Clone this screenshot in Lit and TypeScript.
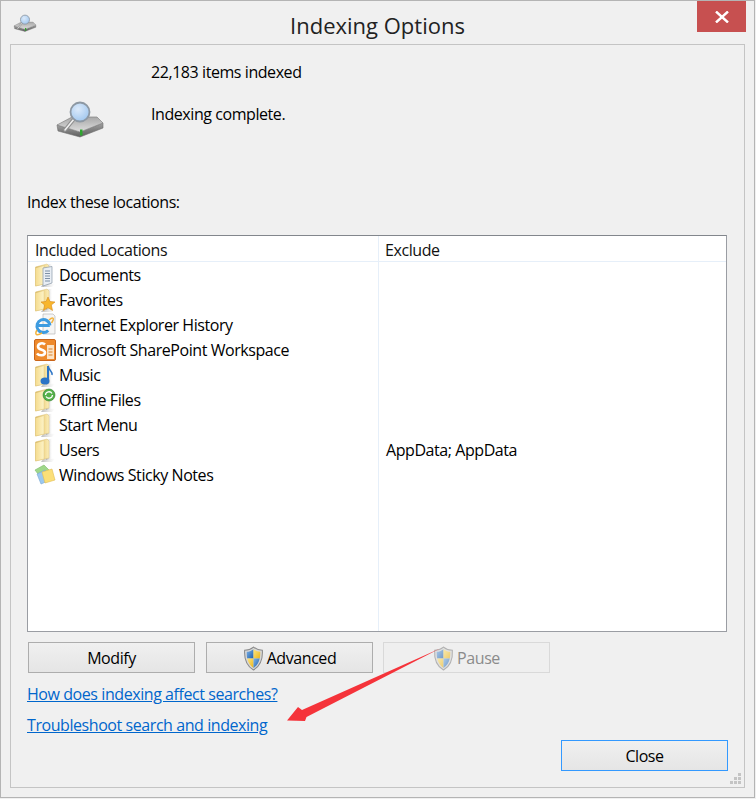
import { LitElement, html, css, svg } from "lit";
import { customElement } from "lit/decorators.js";

const defs = svg`
<defs>
  <linearGradient id="fold" x1="0" y1="0" x2="1" y2="0"><stop offset="0" stop-color="#f5dc8e"/><stop offset="1" stop-color="#fdf3c8"/></linearGradient>
  <linearGradient id="foldb" x1="0" y1="0" x2="1" y2="0"><stop offset="0" stop-color="#c9a040"/><stop offset=".5" stop-color="#efd283"/><stop offset="1" stop-color="#fbeeb9"/></linearGradient>
  <linearGradient id="shade" x1="0" y1="0" x2="1" y2="0"><stop offset="0" stop-color="#9a9a9a" stop-opacity=".7"/><stop offset="1" stop-color="#c8c8c8" stop-opacity="0"/></linearGradient>
  <linearGradient id="disktop" x1="0" y1="0" x2="0" y2="1"><stop offset="0" stop-color="#a8a8a8"/><stop offset="1" stop-color="#dedede"/></linearGradient>
  <linearGradient id="disk" x1="0" y1="0" x2="0" y2="1"><stop offset="0" stop-color="#a0a0a0"/><stop offset="1" stop-color="#5e5e5e"/></linearGradient>
  <radialGradient id="lens" cx=".4" cy=".35" r=".7"><stop offset="0" stop-color="#dceafa"/><stop offset="1" stop-color="#9fc6ee"/></radialGradient>
  <linearGradient id="sh1" x1="0" y1="0" x2="1" y2="1"><stop offset="0" stop-color="#7fb4e6"/><stop offset="1" stop-color="#1f5fae"/></linearGradient>
  <linearGradient id="sh2" x1="0" y1="0" x2="1" y2="1"><stop offset="0" stop-color="#ffe680"/><stop offset="1" stop-color="#eab51c"/></linearGradient>
</defs>`;

const folderBase = svg`
  <path d="M10 20 L21 21 L18 24 L7 24 Z" fill="url(#shade)"/>
  <path d="M12 2 L18 0.500 L18 20 L12 22 Z" fill="url(#shade)"/>
  <path d="M1.500 4 L13 1 L15 3 L15 20 L1.500 23 Z" fill="url(#foldb)" stroke="#dcc27c" stroke-width=".5"/>
  <path d="M1.500 5 L10 2.500 L10 21 L1.500 23 Z" fill="url(#fold)" stroke="#e0c882" stroke-width=".5"/>`;

const folder = (over: unknown = null) => svg`<svg class="ico" viewBox="0 0 22 24">${folderBase}${over}</svg>`;

const icons: Record<string, unknown> = {
  doc: folder(svg`<path d="M9 5 L18 3.500 L18 20 L9 23 Z" fill="#e9eef4" stroke="#8a98a8" stroke-width=".7"/><path d="M11 8h5M11 10.500h5M11 13h5M11 15.500h5M11 18h5" stroke="#7d90a6" stroke-width="1"/>`),
  fav: folder(svg`<path d="M14 9 L16 13.500 L21 14 L17.300 17 L18.500 22.500 L14 19.600 L9.500 22.500 L10.700 17 L7 14 L12 13.500 Z" fill="#f8b62c" stroke="#d98a1a" stroke-width=".6"/>`),
  ie: svg`<svg class="ico" viewBox="0 0 22 24">
    <path d="M9 1 L19 1 L21 3 L21 21 L9 21 Z" fill="#f5f5f5" stroke="#b8b8b8" stroke-width=".7"/>
    <path d="M3.600 12.500 H15.800 M15.900 12.500 A6.500 6.500 0 1 0 14.200 17.500" fill="none" stroke="#3d9be0" stroke-width="3"/>
    <path d="M15 7 C19 3.500 21 5 17.500 10 M3 17 C0 22 3 23 8 20" fill="none" stroke="#f2b33d" stroke-width="1.500"/></svg>`,
  sp: svg`<svg class="ico" viewBox="0 0 22 24">
    <rect x="0.500" y="1.500" width="21" height="21" rx="1.500" fill="#ee8a2c" stroke="#c9651a"/>
    <path d="M13 7 H20 V21 H13 Z" fill="#fbe3c6"/>
    <path d="M14.500 11h4M14.500 14h4M14.500 17h4" stroke="#d9822b" stroke-width="1"/>
    <path d="M11 6.500 C9 4.500 4 5 4 8.500 C4 12.500 11 11 11 14.500 C11 18 5 18 3 15.500" fill="none" stroke="#fff" stroke-width="2.600"/></svg>`,
  music: folder(svg`<path d="M14 3 L14 17" stroke="#2b74c6" stroke-width="2"/><path d="M14 3 C15 8 19 8 18 12" fill="none" stroke="#2b74c6" stroke-width="1.500"/><ellipse cx="11" cy="18" rx="4.500" ry="3.500" fill="#2b74c6"/>`),
  off: folder(svg`<circle cx="15" cy="7" r="6" fill="#55b04a" stroke="#2f7d2a" stroke-width=".6"/><path d="M11.500 7 A3.500 3.500 0 0 1 18 5.500 M18.500 7 A3.500 3.500 0 0 1 12 8.500" fill="none" stroke="#fff" stroke-width="1.300"/>`),
  plain: folder(),
  notes: svg`<svg class="ico" viewBox="0 0 22 24">
    <path d="M1 7 L10 2 L16 8 L7 15 Z" fill="#9fd88a" stroke="#7db86a" stroke-width=".6"/>
    <path d="M3 11 L11 7 L14 18 L7 21 Z" fill="#9cc8ee" stroke="#78a8d4" stroke-width=".6"/>
    <path d="M8 9 L18 6 L21 17 L11 20 Z" fill="#fbdf78" stroke="#e2bd50" stroke-width=".6"/></svg>`,
};

const indexer = (cls: string) => svg`<svg class=${cls} viewBox="0 0 50 40">
  <path d="M2 27 L25 34 L25 39 L3 33 Z" fill="url(#disk)" stroke="#6e6e6e" stroke-width=".6" stroke-linejoin="round"/>
  <path d="M25 34 L48 25 L48 30 L25 39 Z" fill="url(#disk)" stroke="#6e6e6e" stroke-width=".6" stroke-linejoin="round"/>
  <path d="M2 27 L17 19 L42 19 L48 25 L25 34 Z" fill="url(#disktop)" stroke="#858585" stroke-width=".7" stroke-linejoin="round"/>
  <rect x="25" y="31.500" width="2.500" height="6" fill="#2fa52f"/>
  <path d="M10 32 L19 21" stroke="#8f8f8f" stroke-width="3.600" stroke-linecap="round"/>
  <path d="M10 32 L19 21" stroke="#f0f0f0" stroke-width="1.500" stroke-linecap="round"/>
  <circle cx="25" cy="14" r="9.500" fill="url(#lens)" stroke="#8d98a3" stroke-width="1.800"/>
</svg>`;

const shield = (cls = "") => svg`<svg class="shield ${cls}" viewBox="0 0 20 24">
  <path d="M10 1 C7 3.500 4 4 1.500 4 C1 12 3 19 10 23 C17 19 19 12 18.500 4 C16 4 13 3.500 10 1 Z" fill="#d8d8d8" stroke="#8a8a8a" stroke-width="1"/>
  <path d="M10 3 C8 4.500 5.500 5.500 3.500 5.500 C3.500 8 3.500 10 4 12 H10 Z" fill="url(#sh1)"/>
  <path d="M10 3 C12 4.500 14.500 5.500 16.500 5.500 C16.500 8 16.500 10 16 12 H10 Z" fill="url(#sh2)"/>
  <path d="M4 12 H10 V21 C6.500 19 4.800 15.500 4 12 Z" fill="url(#sh2)"/>
  <path d="M16 12 H10 V21 C13.500 19 15.200 15.500 16 12 Z" fill="url(#sh1)"/>
</svg>`;

const rows: [string, string, string][] = [
  ["doc", "Documents", ""],
  ["fav", "Favorites", ""],
  ["ie", "Internet Explorer History", ""],
  ["sp", "Microsoft SharePoint Workspace", ""],
  ["music", "Music", ""],
  ["off", "Offline Files", ""],
  ["plain", "Start Menu", ""],
  ["plain", "Users", "AppData; AppData"],
  ["notes", "Windows Sticky Notes", ""],
];

@customElement("app-root")
export class AppRoot extends LitElement {
  static styles = css`
    :host {
      display: block;
      width: 756px;
      height: 799px;
      font-family: "Open Sans", "Noto Sans", sans-serif;
      font-size: 16px;
      letter-spacing: -0.43px;
      color: #000;
      background: #f0f0f0;
    }
    * { box-sizing: border-box; }
    .defs { width: 0; height: 0; position: absolute; }
    .window {
      position: relative;
      width: 755px;
      height: 798px;
      border: 1px solid #b4b4b4;
      display: flex;
      flex-direction: column;
      padding: 0 9px 9px 9px;
    }
    .titlebar {
      height: 43px;
      flex: none;
      display: grid;
      grid-template-columns: 40px 1fr 40px;
      align-items: center;
    }
    .title-icon { width: 24px; height: 19px; margin: 0 0 0 3px; }
    .title {
      text-align: center;
      font-size: 22px;
      letter-spacing: 0;
      color: #222;
      margin-top: 5px;
    }
    .close {
      position: absolute;
      top: 0;
      right: 8px;
      width: 49px;
      height: 31px;
      background: #c75050;
      display: flex;
      align-items: center;
      justify-content: center;
    }
    .close svg { width: 14px; height: 12px; }
    .panel {
      flex: 1;
      border: 1px solid #c4c4c4;
      padding: 0 17px 0 16px;
      display: flex;
      flex-direction: column;
      position: relative;
    }
    .status {
      height: 146px;
      flex: none;
      display: flex;
    }
    .status-icon { width: 124px; flex: none; padding: 53px 0 0 28px; }
    .big-icon { width: 50px; height: 40px; display: block; }
    .status-text { padding-top: 17px; }
    .status-text p { margin: 0 0 21px; line-height: 21px; }
    .label { height: 44px; line-height: 23px; flex: none; }
    .list {
      height: 397px;
      flex: none;
      border: 1px solid #9a9da3;
      border-top-color: #82868c;
      background: #fff;
      display: grid;
      grid-template-columns: 350px 1fr;
      grid-template-rows: 26px 1fr;
    }
    .head {
      border-bottom: 1px solid #e6eff9;
      padding: 3px 0 0 7px;
      line-height: 22px;
      color: #111;
    }
    .head.ex { padding-left: 6px; border-left: 1px solid #e6eff9; }
    .col.ex { border-left: 1px solid #e6eff9; padding-left: 7px; }
    .row {
      height: 25px;
      display: flex;
      align-items: center;
      gap: 3px;
      padding-left: 6px;
      white-space: nowrap;
    }
    .ico { width: 22px; height: 24px; flex: none; }
    .col.ex .row { padding-left: 0; }
    .buttons {
      display: flex;
      gap: 11px;
      margin: 10px 0 0 1px;
      flex: none;
    }
    button {
      width: 167px;
      height: 31px;
      font: inherit;
      letter-spacing: inherit;
      color: #000;
      border: 1px solid #adadad;
      background: linear-gradient(#f0f0f0, #e5e5e5);
      display: flex;
      align-items: center;
      justify-content: center;
      gap: 3px;
      padding: 0;
    }
    button[disabled] {
      color: #8b8b8b;
      border-color: #d9d9d9;
      background: #efefef;
      margin-left: -1px;
    }
    .shield { width: 21px; height: 25px; flex: none; margin-top: 1px; }
    .shield.dim { opacity: 0.6; }
    .links {
      margin-top: 11px;
      display: flex;
      flex-direction: column;
      gap: 10px;
      line-height: 21px;
      align-items: flex-start;
    }
    a {
      color: #0066cc;
      text-decoration: underline;
      cursor: pointer;
    }
    .foot {
      display: flex;
      justify-content: flex-end;
      flex: none;
      margin: 4px -1px 0 0;
    }
    .primary {
      width: 167px;
      height: 31px;
      border: 1px solid #3399ff;
    }
    .grip {
      position: absolute;
      right: 2px;
      bottom: 2px;
      width: 12px;
      height: 12px;
    }
    .arrow {
      position: absolute;
      left: 0;
      top: 0;
      width: 756px;
      height: 799px;
      pointer-events: none;
    }
  `;

  render() {
    return html`
      <svg class="defs">${defs}</svg>
      <div class="window">
        <div class="titlebar">
          ${indexer("title-icon")}
          <div class="title">Indexing Options</div>
          <div></div>
        </div>
        <div class="close">
          <svg viewBox="0 0 14 12"><path d="M1 0.500 L13 11.500 M13 0.500 L1 11.500" stroke="#fff" stroke-width="2.400"/></svg>
        </div>
        <div class="panel">
          <div class="status">
            <div class="status-icon">${indexer("big-icon")}</div>
            <div class="status-text">
              <p>22,183 items indexed</p>
              <p>Indexing complete.</p>
            </div>
          </div>
          <div class="label">Index these locations:</div>
          <div class="list">
            <div class="head">Included Locations</div>
            <div class="head ex">Exclude</div>
            <div class="col">
              ${rows.map(
                ([i, n]) => html`<div class="row">${icons[i]}<span>${n}</span></div>`
              )}
            </div>
            <div class="col ex">
              ${rows.map(([, , e]) => html`<div class="row"><span>${e}</span></div>`)}
            </div>
          </div>
          <div class="buttons">
            <button>Modify</button>
            <button>${shield()}Advanced</button>
            <button disabled>${shield("dim")}Pause</button>
          </div>
          <div class="links">
            <a>How does indexing affect searches?</a>
            <a>Troubleshoot search and indexing</a>
          </div>
          <div class="foot"><button class="primary">Close</button></div>
          <svg class="grip" viewBox="0 0 12 12" fill="#c4c4c4">
            <rect x="8" y="0" width="3" height="3"/>
            <rect x="4" y="4" width="3" height="3"/><rect x="8" y="4" width="3" height="3"/>
            <rect x="0" y="8" width="3" height="3"/><rect x="4" y="8" width="3" height="3"/><rect x="8" y="8" width="3" height="3"/>
          </svg>
        </div>
      </div>
      <svg class="arrow" viewBox="0 0 756 799">
        <path d="M440 648.500 L306.500 717 L305 721 L287 720.500 L298 707 L302 710 Z" fill="#f5333a"/>
      </svg>
    `;
  }
}
